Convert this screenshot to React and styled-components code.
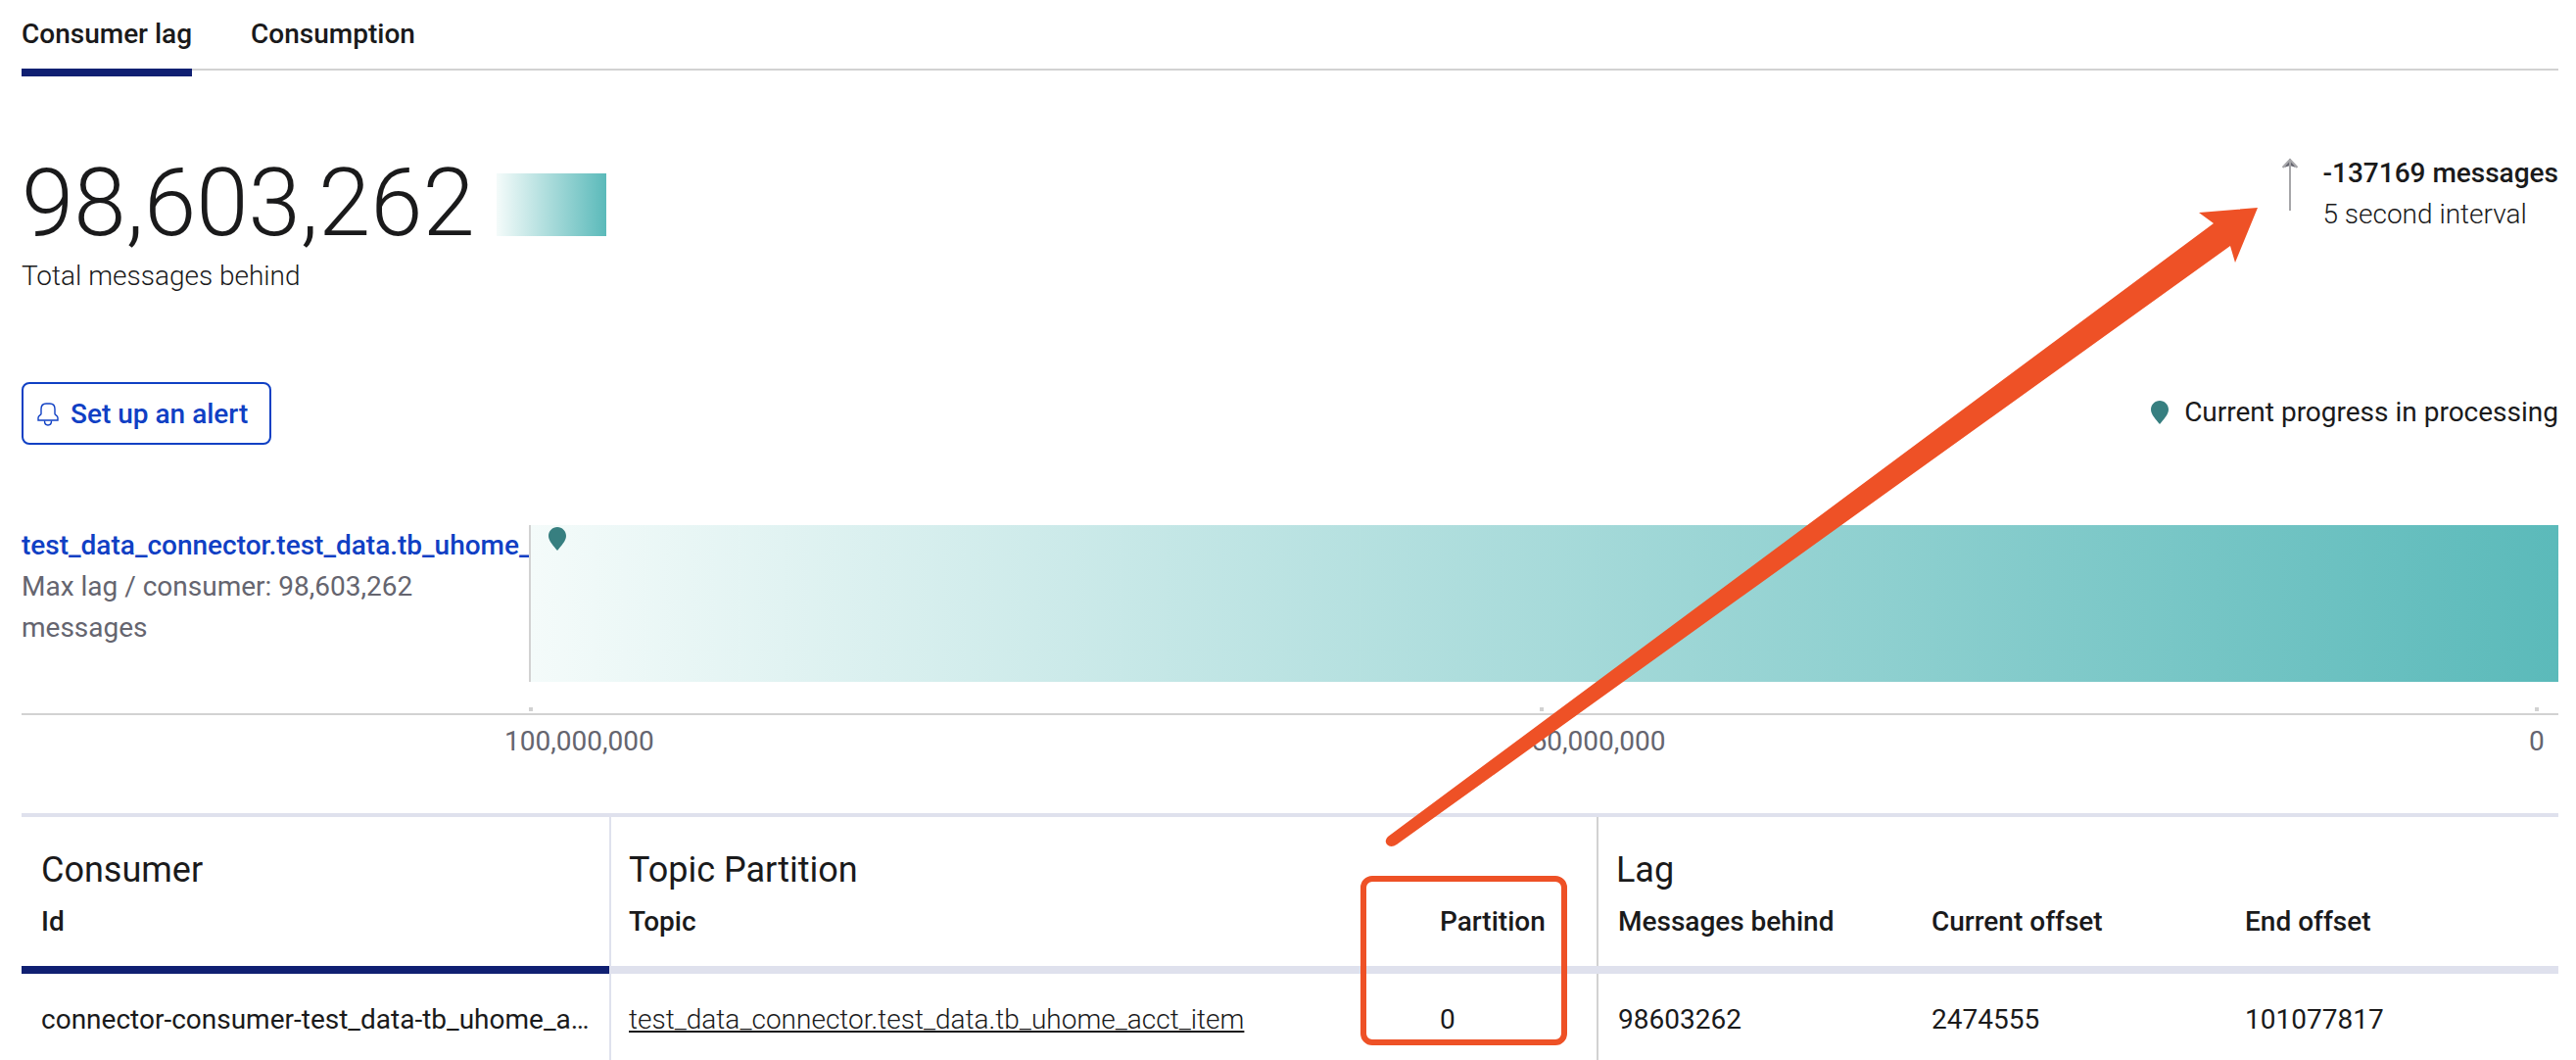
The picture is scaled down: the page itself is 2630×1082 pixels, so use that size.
import React from "react";
import styled, { createGlobalStyle } from "styled-components";

const GlobalStyle = createGlobalStyle`
  *, *::before, *::after { box-sizing: border-box; }
  body {
    margin: 0;
    background: #fff;
    color: #1a1a1b;
    font-family: Roboto, "Liberation Sans", sans-serif;
    font-size: 28px;
    line-height: 42px;
  }
`;

const teal = "linear-gradient(90deg, #f4fbfa 0%, #5bbaba 100%)";

const Page = styled.main`
  position: relative;
  padding: 0 18px 0 22px;
`;

const Tabs = styled.nav`
  display: flex;
  gap: 60px;
  height: 72px;
  border-bottom: 2px solid #d2d2d2;
`;

const Tab = styled.a`
  height: 78px;
  padding-top: 14px;
  color: inherit;
  font-weight: 500;
  text-decoration: none;
  border-bottom: 8px solid ${(p) => (p.$active ? "#102072" : "transparent")};
`;

const Summary = styled.section`
  display: flex;
  justify-content: space-between;
  align-items: flex-start;
  padding-top: 80px;
`;

const Total = styled.div`
  display: flex;
  align-items: center;
  gap: 22px;
  font-size: 96px;
  font-weight: 300;
  line-height: 108px;
`;

const Swatch = styled.span`
  width: 112px;
  height: 64px;
  margin-top: 4px;
  background: ${teal};
`;

const Caption = styled.p`
  margin: 0;
  font-weight: 300;
`;

const TotalBlock = styled.div`
  padding-top: 1px;
`;

const Change = styled.div`
  display: flex;
  align-items: flex-start;
  gap: 24px;
  padding-top: 4px;
`;

const ArrowIcon = styled.svg`
  margin-top: 5px;
`;

const ChangeAmount = styled.p`
  margin: 0;
  font-weight: 500;
`;

const Actions = styled.section`
  display: flex;
  justify-content: space-between;
  align-items: center;
  margin-top: 87px;
`;

const AlertButton = styled.button`
  display: flex;
  align-items: center;
  gap: 12px;
  height: 64px;
  padding: 2px 22px 0 14px;
  border: 2px solid #1040c4;
  border-radius: 8px;
  background: #fff;
  color: #1040c4;
  font: inherit;
  font-weight: 500;
`;

const Legend = styled.div`
  display: flex;
  align-items: center;
  gap: 16px;
  padding-bottom: 2px;
`;

const Chart = styled.section`
  margin-top: 82px;
`;

const LagRow = styled.div`
  display: grid;
  grid-template-columns: 518px 1fr;
  height: 192px;
  align-items: start;
`;

const LagLabel = styled.div`
  color: #65656f;
  overflow: hidden;
`;

const GroupLink = styled.a`
  display: block;
  overflow: hidden;
  white-space: nowrap;
  color: #1040c4;
  font-weight: 500;
  text-decoration: none;
`;

const Bar = styled.div`
  display: flex;
  height: 160px;
  padding: 2px 18px;
  border-left: 2px solid #d2d2d2;
  background: ${teal};
`;

const Ticks = styled.div`
  display: grid;
  grid-template-columns: 1032fr 1016fr 4px;
  padding: 0 20px 2px 518px;
  margin-top: -6px;
  border-bottom: 2px solid #d2d2d2;
`;

const Dot = styled.span`
  width: 4px;
  height: 4px;
  background: #d2d2d2;
`;

const AxisLabels = styled.div`
  display: grid;
  grid-template-columns: 1048fr 1018fr 16px;
  padding: 6px 14px 0 493px;
  color: #65656f;
`;

const Table = styled.table`
  width: 100%;
  margin-top: 52px;
  table-layout: fixed;
  border-collapse: separate;
  border-spacing: 0;
  border-top: 4px solid #dfe1ed;
  text-align: left;
`;

const Col = styled.col`
  width: ${(p) => p.$width || "auto"};
`;

const divider = {
  lavender: "2px solid #dfe1ed",
  grey: "2px solid #d2d2d2",
};

const indent = { lavender: "18px", grey: "20px" };

const GroupHead = styled.th`
  padding: 30px 18px 2px ${(p) => (p.$divider ? "18px" : "20px")};
  border-left: ${(p) => divider[p.$divider] || "none"};
  font-size: 36px;
  font-weight: 400;
  line-height: 48px;
`;

const ColumnHead = styled.th`
  padding: 6px 18px 24px ${(p) => indent[p.$divider] || "20px"};
  border-left: ${(p) => divider[p.$divider] || "none"};
  font-weight: 500;
`;

const Rule = styled.td`
  height: 8px;
  padding: 0;
  background: ${(p) => (p.$active ? "#102072" : "#dfe1ed")};
`;

const Cell = styled.td`
  padding: 26px 18px 20px ${(p) => indent[p.$divider] || "20px"};
  border-left: ${(p) => divider[p.$divider] || "none"};
  overflow: hidden;
  white-space: nowrap;
  text-overflow: ellipsis;
`;

const TopicLink = styled.a`
  color: inherit;
  font-weight: 300;
  text-decoration: underline;
`;

const Highlight = styled.div`
  position: absolute;
  top: 894px;
  right: 1030px;
  width: 211px;
  height: 173px;
  border: 6px solid #ee5126;
  border-radius: 12px;
  pointer-events: none;
`;

const Pointer = styled.svg`
  position: absolute;
  top: 212px;
  right: 325px;
  pointer-events: none;
`;

const Pin = () => (
  <svg width="18" height="24" viewBox="0 0 18 24" aria-hidden="true">
    <path d="M9 0C4 0 0 4 0 9c0 5 5 10 9 15 4-5 9-10 9-15 0-5-4-9-9-9z" fill="#377f80" />
  </svg>
);

const Bell = () => (
  <svg width="22" height="24" viewBox="0 0 22 24" fill="none" stroke="currentColor" strokeWidth="1.4" aria-hidden="true">
    <path d="M4 11.500V6.500C4 3 6 1 9 1h4c3 0 5 2 5 5.500v5c0 1.500 3 1.500 3 4V18H1v-2.500c0-2.500 3-2.500 3-4z" />
    <path d="M7.500 18.500c0 3 1.500 4.500 3.500 4.500s3.500-1.500 3.500-4.500" />
  </svg>
);

const UpArrow = () => (
  <ArrowIcon width="18" height="54" viewBox="0 0 18 54" aria-hidden="true">
    <path d="M9 2l6 8-6-2-6 2z" fill="#65656f" />
    <path d="M1.500 10L9 2l7.500 8M9 1v53" fill="none" stroke="#a6a6a9" strokeWidth="2" />
  </ArrowIcon>
);

export default function App() {
  return (
    <>
      <GlobalStyle />
      <Page>
        <Tabs>
          <Tab href="#lag" $active>Consumer lag</Tab>
          <Tab href="#consumption">Consumption</Tab>
        </Tabs>

        <Summary>
          <TotalBlock>
            <Total>98,603,262<Swatch /></Total>
            <Caption>Total messages behind</Caption>
          </TotalBlock>
          <Change>
            <UpArrow />
            <div>
              <ChangeAmount>-137169 messages</ChangeAmount>
              <Caption>5 second interval</Caption>
            </div>
          </Change>
        </Summary>

        <Actions>
          <AlertButton type="button"><Bell />Set up an alert</AlertButton>
          <Legend><Pin />Current progress in processing</Legend>
        </Actions>

        <Chart>
          <LagRow>
            <LagLabel>
              <GroupLink href="#group">test_data_connector.test_data.tb_uhome_acct_item</GroupLink>
              Max lag / consumer: 98,603,262 messages
            </LagLabel>
            <Bar><Pin /></Bar>
          </LagRow>
          <Ticks><Dot /><Dot /><Dot /></Ticks>
          <AxisLabels>
            <span>100,000,000</span>
            <span>50,000,000</span>
            <span>0</span>
          </AxisLabels>
        </Chart>

        <Table>
          <colgroup>
            <Col $width="600px" />
            <Col />
            <Col $width="180px" />
            <Col $width="322px" />
            <Col $width="320px" />
            <Col $width="340px" />
          </colgroup>
          <thead>
            <tr>
              <GroupHead scope="colgroup">Consumer</GroupHead>
              <GroupHead scope="colgroup" colSpan={2} $divider="lavender">Topic Partition</GroupHead>
              <GroupHead scope="colgroup" colSpan={3} $divider="grey">Lag</GroupHead>
            </tr>
            <tr>
              <ColumnHead scope="col">Id</ColumnHead>
              <ColumnHead scope="col" $divider="lavender">Topic</ColumnHead>
              <ColumnHead scope="col">Partition</ColumnHead>
              <ColumnHead scope="col" $divider="grey">Messages behind</ColumnHead>
              <ColumnHead scope="col">Current offset</ColumnHead>
              <ColumnHead scope="col">End offset</ColumnHead>
            </tr>
            <tr aria-hidden="true">
              <Rule $active />
              <Rule colSpan={5} />
            </tr>
          </thead>
          <tbody>
            <tr>
              <Cell>connector-consumer-test_data-tb_uhome_acct_item</Cell>
              <Cell $divider="lavender">
                <TopicLink href="#topic">test_data_connector.test_data.tb_uhome_acct_item</TopicLink>
              </Cell>
              <Cell>0</Cell>
              <Cell $divider="grey">98603262</Cell>
              <Cell>2474555</Cell>
              <Cell>101077817</Cell>
            </tr>
          </tbody>
        </Table>

        <Highlight />
        <Pointer width="892" height="654" viewBox="0 0 892 654" aria-hidden="true">
          <path
            d="M892 0L832 5L847 16L4 642Q0 646 3 650Q7 654 13 650L864 39L869 56Z"
            fill="#ee5126"
          />
        </Pointer>
      </Page>
    </>
  );
}
